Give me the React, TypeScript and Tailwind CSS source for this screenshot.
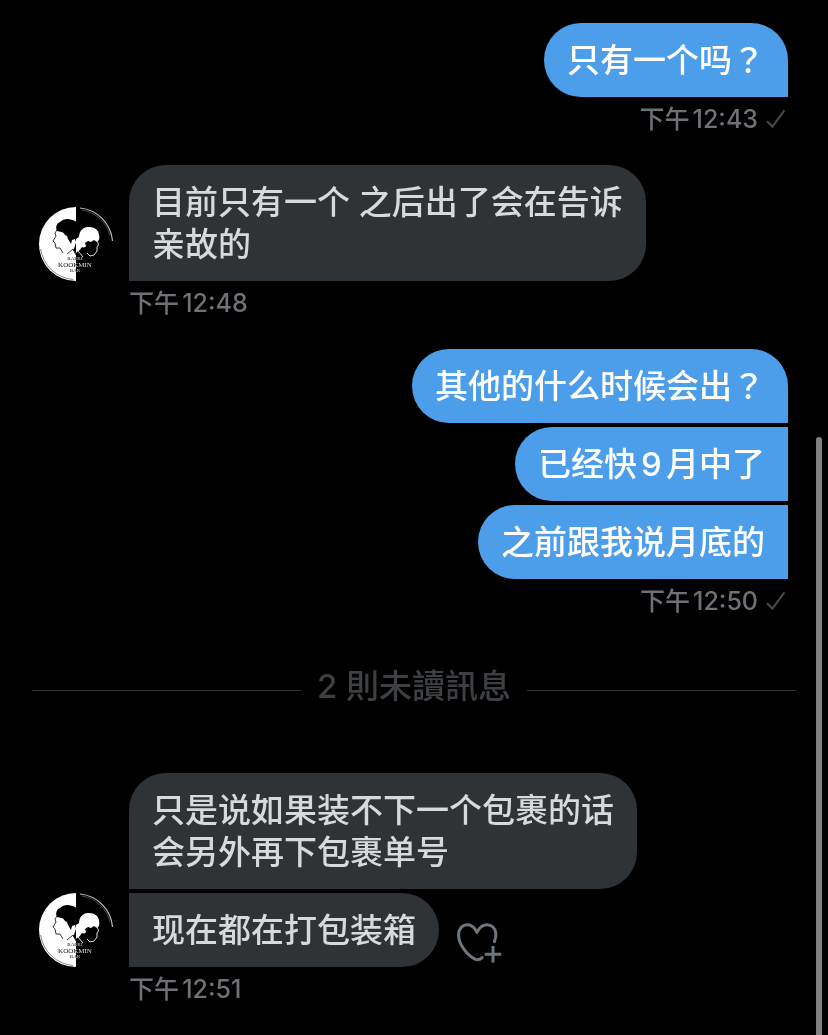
import React from 'react';
import clsx from 'clsx';

interface Message {
  text: string;
  shape: string;
}

interface MessageGroupProps {
  messages: Message[];
  time: string;
  outgoing?: boolean;
  likeable?: boolean;
}

const CheckIcon: React.FC = () => (
  <svg viewBox="0 0 20 20" className="w-5 h-5" fill="none" stroke="currentColor" strokeWidth="2.2" aria-label="已傳送">
    <path d="M1 12.2 6.4 17.6 18.4 1.4" />
  </svg>
);

const HeartPlusIcon: React.FC = () => (
  <svg viewBox="0 0 46 42" className="w-[46px] h-[42px]" fill="none" stroke="currentColor" strokeWidth="3" strokeLinecap="round" strokeLinejoin="round">
    <path d="M37.400 20.600C38.600 17.500 39.200 14.500 38.800 11.800C38 6.800 34.400 3.700 30 3.700C25.600 3.700 22.200 6.600 20 11.400C17.800 6.600 14.800 3.700 10.400 3.700C4.800 3.700 1.600 8.200 1.600 14.200C1.600 23.500 10.500 34.500 18.600 38.400C21.200 39.400 23.200 38.400 25.200 36.600" />
    <path d="M36 25V41.400M27.800 33.200H44.200" strokeLinecap="butt" />
  </svg>
);

const Avatar: React.FC = () => (
  <svg viewBox="0 0 74 74" className="w-[74px] h-[74px] shrink-0" role="img" aria-label="KOOKMIN BAR">
    <path d="M37 0A37 37 0 0 0 37 74Z" fill="#fff" />
    <path d="M1.600 42A36 36 0 0 0 34 72.500" fill="none" stroke="#555" strokeWidth="0.700" />
    <path d="M41 1A36 36 0 0 1 73.500 34" fill="none" stroke="#bbb" strokeWidth="1.200" />
    <path d="M43 3A34 34 0 0 1 71 29" fill="none" stroke="#666" strokeWidth="0.700" />
    {/* left profile */}
    <path d="M18 24C16 20 18 16 21 15C24 12 29 11 33 13C35 13 36 14 37.500 15V37L36 32L33 33L32 37L29 32L28 29L26 28C24 24 21 25 18 24Z" fill="#000" />
    <path d="M37.500 34V48L34 43C36 41 36 38 37.500 34Z" fill="#000" />
    <path d="M18 23L16 26L17 29L14 34L16 36L17 41L21 41L24 46" fill="none" stroke="#222" strokeWidth="0.900" />
    <path d="M37 48L34 42L28 47" fill="none" stroke="#222" strokeWidth="0.900" />
    {/* right profile */}
    <path d="M37 32L40 30C40 25 43 20.500 49 20C55 19.500 60 23 60 28C61 31 60 34 58 35L55 33L52 35L49 34L46 36L47 39C45 42 43 39 42 41C41 44 39 44 37 46Z" fill="#fff" />
    <path d="M58 33L59.500 38L58 40L58 44L55 48L51 49L48 46M39 44L44 50" fill="none" stroke="#ddd" strokeWidth="1" />
    <g fontFamily="'Liberation Serif', serif" textAnchor="middle" fill="#ddd" style={{ mixBlendMode: 'difference' }}>
      <text x="36" y="53" fontSize="5">BAEKI</text>
      <text x="36" y="60" fontSize="7">KOOKMIN</text>
      <text x="36" y="65" fontSize="5">BAR</text>
    </g>
  </svg>
);

const MessageGroup: React.FC<MessageGroupProps> = ({ messages, time, outgoing, likeable }) => (
  <section className={outgoing ? 'pr-10 pl-32' : 'pl-[39px] pr-10'}>
    <div className="flex items-end gap-4">
      {!outgoing && <Avatar />}
      <div className={clsx('flex flex-1 flex-col gap-1', outgoing ? 'items-end' : 'items-start')}>
        {messages.map(({ text, shape }, i) => (
          <div key={text} className="flex items-center gap-[18px]">
            <p
              className={clsx(
                'px-[23px] py-4 text-[33px] leading-[42px] font-medium whitespace-pre-line',
                outgoing ? 'bg-[#4c9eeb] text-white' : 'bg-[#2f3336] text-[#d9d9d9]',
                shape
              )}
            >
              {text}
            </p>
            {likeable && i === messages.length - 1 && (
              <button type="button" aria-label="新增回應" className="mt-6 text-[#6e767d]">
                <HeartPlusIcon />
              </button>
            )}
          </div>
        ))}
      </div>
    </div>
    <div
      className={clsx(
        'mt-[6px] flex items-center gap-2 text-[25px] leading-8 font-medium text-[#6e7276]',
        outgoing ? 'justify-end pr-0.5' : 'pl-[90px]'
      )}
    >
      <time>{time}</time>
      {outgoing && <span className="text-[#43484c]"><CheckIcon /></span>}
    </div>
  </section>
);

const App: React.FC = () => {
  return (
    <main
      lang="zh-Hant"
      className="relative min-h-screen overflow-hidden bg-black pt-[23px] font-[Inter,'Noto_Sans_CJK_TC',sans-serif] [text-autospace:normal]"
    >
      <div className="flex flex-col gap-[30px]">
        <MessageGroup
          outgoing
          time="下午12:43"
          messages={[{ text: '只有一个吗？', shape: 'rounded-[37px] rounded-br-none' }]}
        />
        <MessageGroup
          time="下午12:48"
          messages={[{ text: '目前只有一个 之后出了会在告诉\n亲故的', shape: 'rounded-[37px] rounded-bl-none' }]}
        />
        <MessageGroup
          outgoing
          time="下午12:50"
          messages={[
            { text: '其他的什么时候会出？', shape: 'rounded-[37px] rounded-br-none' },
            { text: '已经快9月中了', shape: 'rounded-l-[37px]' },
            { text: '之前跟我说月底的', shape: 'rounded-l-[37px]' },
          ]}
        />
      </div>

      <div className="mt-12 mb-[58px] flex items-center gap-4 px-8">
        <div className="h-px flex-1 bg-[#2f3336]" />
        <h2 className="pb-2 text-[33px] leading-[42px] font-medium text-[#3d4043]">2 則未讀訊息</h2>
        <div className="h-px flex-1 bg-[#2f3336]" />
      </div>

      <MessageGroup
        likeable
        time="下午12:51"
        messages={[
          { text: '只是说如果装不下一个包裹的话\n会另外再下包裹单号', shape: 'rounded-[37px] rounded-bl-none' },
          { text: '现在都在打包装箱', shape: 'rounded-r-[37px]' },
        ]}
      />

      {/* scroll thumb */}
      <div className="absolute top-[437px] right-1.5 bottom-0 w-1.5 rounded-t-full bg-[#808080]" />
    </main>
  );
};

export default App;
